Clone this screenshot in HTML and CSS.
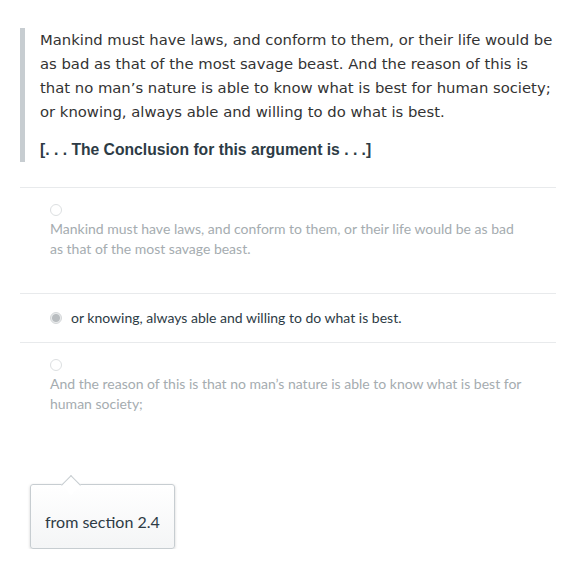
FILE: index.html
```html
<!DOCTYPE html>
<html>
<head>
<meta charset="utf-8">
<link rel="stylesheet" href="styles.css">
</head>
<body>
<div class="page">
  <blockquote class="quote">
    <p class="passage">Mankind must have laws, and conform to them, or their life would be as bad as that of the most savage beast. And the reason of this is that no man’s nature is able to know what is best for human society; or knowing, always able and willing to do what is best.</p>
    <p class="prompt">[. . . The Conclusion for this argument is . . .]</p>
  </blockquote>
  <div class="answers">
    <div class="answer disabled">
      <span class="radio"></span>
      <div class="answer-text">Mankind must have laws, and conform to them, or their life would be as bad as that of the most savage beast.</div>
    </div>
    <div class="answer selected">
      <span class="radio checked"></span>
      <div class="answer-text">or knowing, always able and willing to do what is best.</div>
    </div>
    <div class="answer disabled last">
      <span class="radio"></span>
      <div class="answer-text">And the reason of this is that no man’s nature is able to know what is best for human society;</div>
    </div>
  </div>
  <div class="tip-wrap">
    <div class="tooltip">from section 2.4</div>
  </div>
</div>
</body>
</html>
```
FILE: styles.css
```css
html, body {
  margin: 0;
  padding: 0;
  background: #ffffff;
}
.page {
  padding: 28px 18px 0 20px;
}
.quote {
  margin: 0;
  border-left: 5px solid #c7cdd1;
  padding: 0 0 0 15px;
}
.passage {
  margin: 0;
  font-family: "DejaVu Sans", Verdana, sans-serif;
  font-size: 14.8px;
  line-height: 24px;
  color: #333333;
}
.prompt {
  margin: 14px 0 0 0;
  font-family: "Liberation Sans", Arial, sans-serif;
  font-weight: bold;
  font-size: 15.7px;
  line-height: 24px;
  color: #2d3b45;
}
.answers {
  margin-top: 25px;
  border-top: 1px solid #e8eaec;
}
.answer {
  font-family: Lato, sans-serif;
  font-size: 14px;
  line-height: 20px;
  border-bottom: 1px solid #e8eaec;
  padding: 16px 30px 34px 30px;
}
.answer.disabled .answer-text {
  color: #a5acb0;
  margin-top: 3px;
}
.answer.last {
  border-bottom: none;
}
.answer.selected {
  display: flex;
  align-items: center;
  gap: 9px;
  padding: 14px 30px 14px 30px;
  color: #2d3b45;
}
.radio {
  display: block;
  width: 12px;
  height: 12px;
  box-sizing: border-box;
  border-radius: 50%;
  border: 1px solid #dcdfe1;
  background: #ffffff;
}
.radio.checked {
  border: 1px solid #d4d7d9;
  background: radial-gradient(circle, #b9bdc0 0 3.5px, #e9ebec 4.5px);
}
.tip-wrap {
  padding: 36px 0 0 10px;
}
.tooltip {
  position: relative;
  display: inline-block;
  box-sizing: border-box;
  width: 145px;
  height: 65px;
  padding: 0 14px;
  border: 1px solid #c7cdd1;
  border-radius: 3px;
  background: linear-gradient(#ffffff, #f4f5f6);
  box-shadow: 0 1px 3px rgba(0, 0, 0, 0.18);
  font-family: Lato, sans-serif;
  font-size: 16px;
  line-height: 73px;
  color: #2d3b45;
}
.tooltip::before {
  content: "";
  position: absolute;
  top: -9px;
  left: 33px;
  width: 13px;
  height: 13px;
  background: #ffffff;
  border-left: 1px solid #c7cdd1;
  border-top: 1px solid #c7cdd1;
  transform: translateY(2px) rotate(45deg);
}
```
